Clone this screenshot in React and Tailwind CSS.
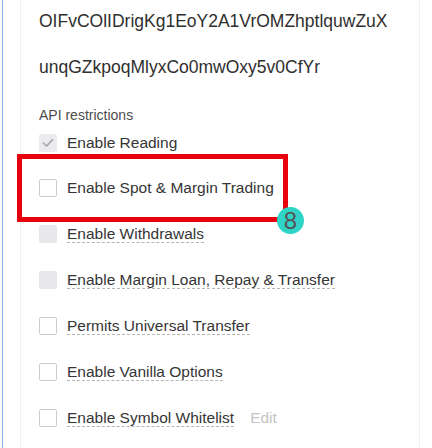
import React from 'react';

const rows = [
  { label: 'Enable Reading', state: 'checkedDisabled', dotted: false },
  { label: 'Enable Spot & Margin Trading', state: 'empty', dotted: false },
  { label: 'Enable Withdrawals', state: 'disabled', dotted: true },
  { label: 'Enable Margin Loan, Repay & Transfer', state: 'disabled', dotted: true },
  { label: 'Permits Universal Transfer', state: 'empty', dotted: true },
  { label: 'Enable Vanilla Options', state: 'empty', dotted: true },
  { label: 'Enable Symbol Whitelist', state: 'empty', dotted: true, edit: true },
];

function Box({ state }) {
  if (state === 'checkedDisabled') {
    return (
      <span className="w-[18px] h-[18px] rounded-[2px] bg-[#ebebee] flex items-center justify-center shrink-0">
        <svg width="12" height="10" viewBox="0 0 12 10" fill="none">
          <path d="M1.5 5.2 4.5 8 10.5 1.8" stroke="#a9a9ae" strokeWidth="1.7" strokeLinecap="round" strokeLinejoin="round" />
        </svg>
      </span>
    );
  }
  if (state === 'disabled') {
    return <span className="w-[18px] h-[18px] rounded-[2px] bg-[#e8e8ec] shrink-0" />;
  }
  return <span className="w-[18px] h-[18px] rounded-[2px] border border-[#cdcdd0] bg-white shrink-0" />;
}

function Row({ row }) {
  return (
    <div className="h-6 flex items-center gap-[10px]">
      <Box state={row.state} />
      <span className="leading-6 text-[15.5px] text-[#353535]">
        <span className={row.dotted ? 'border-b border-dashed border-[#b5b5b5]' : ''}>{row.label}</span>
        {row.edit && <span className="ml-4 text-[#c4c4c4]">Edit</span>}
      </span>
    </div>
  );
}

export default function App() {
  return (
    <div className="relative w-[432px] h-[448px] bg-white overflow-hidden flex font-['Liberation_Sans',Arial,sans-serif]">
      <div className="ml-[2px] w-px bg-[#86b9ec]" />
      <div className="ml-[17px] w-[400px] border-x border-[#f1f1f3] pl-[18px] pt-[9px]">
        <div className="h-6 leading-6 text-[17.5px] text-[#2f2f2f]">OIFvCOlIDrigKg1EoY2A1VrOMZhptlquwZuX</div>
        <div className="mt-[22px] h-6 leading-6 text-[17.5px] text-[#2f2f2f]">unqGZkpoqMlyxCo0mwOxy5v0CfYr</div>
        <div className="mt-[26px] h-5 leading-5 text-[14px] text-[#4d4d4d]">API restrictions</div>
        <div className="mt-[6px] flex flex-col gap-[22px]">
          {rows.map((r, i) => (
            <div key={r.label} className={i === 0 ? '-mb-px' : ''}>
              <Row row={r} />
            </div>
          ))}
        </div>
      </div>

      {/* annotation overlay */}
      <div className="absolute left-[17px] top-[154px] w-[271px] h-[68px] border-[5px] border-[#e9000d]" />
      <div className="absolute left-[277px] top-[207px] w-[27px] h-[27px] rounded-full bg-[#2fd4c7] flex items-center justify-center text-[24px] leading-none text-[#555]">
        8
      </div>
    </div>
  );
}
